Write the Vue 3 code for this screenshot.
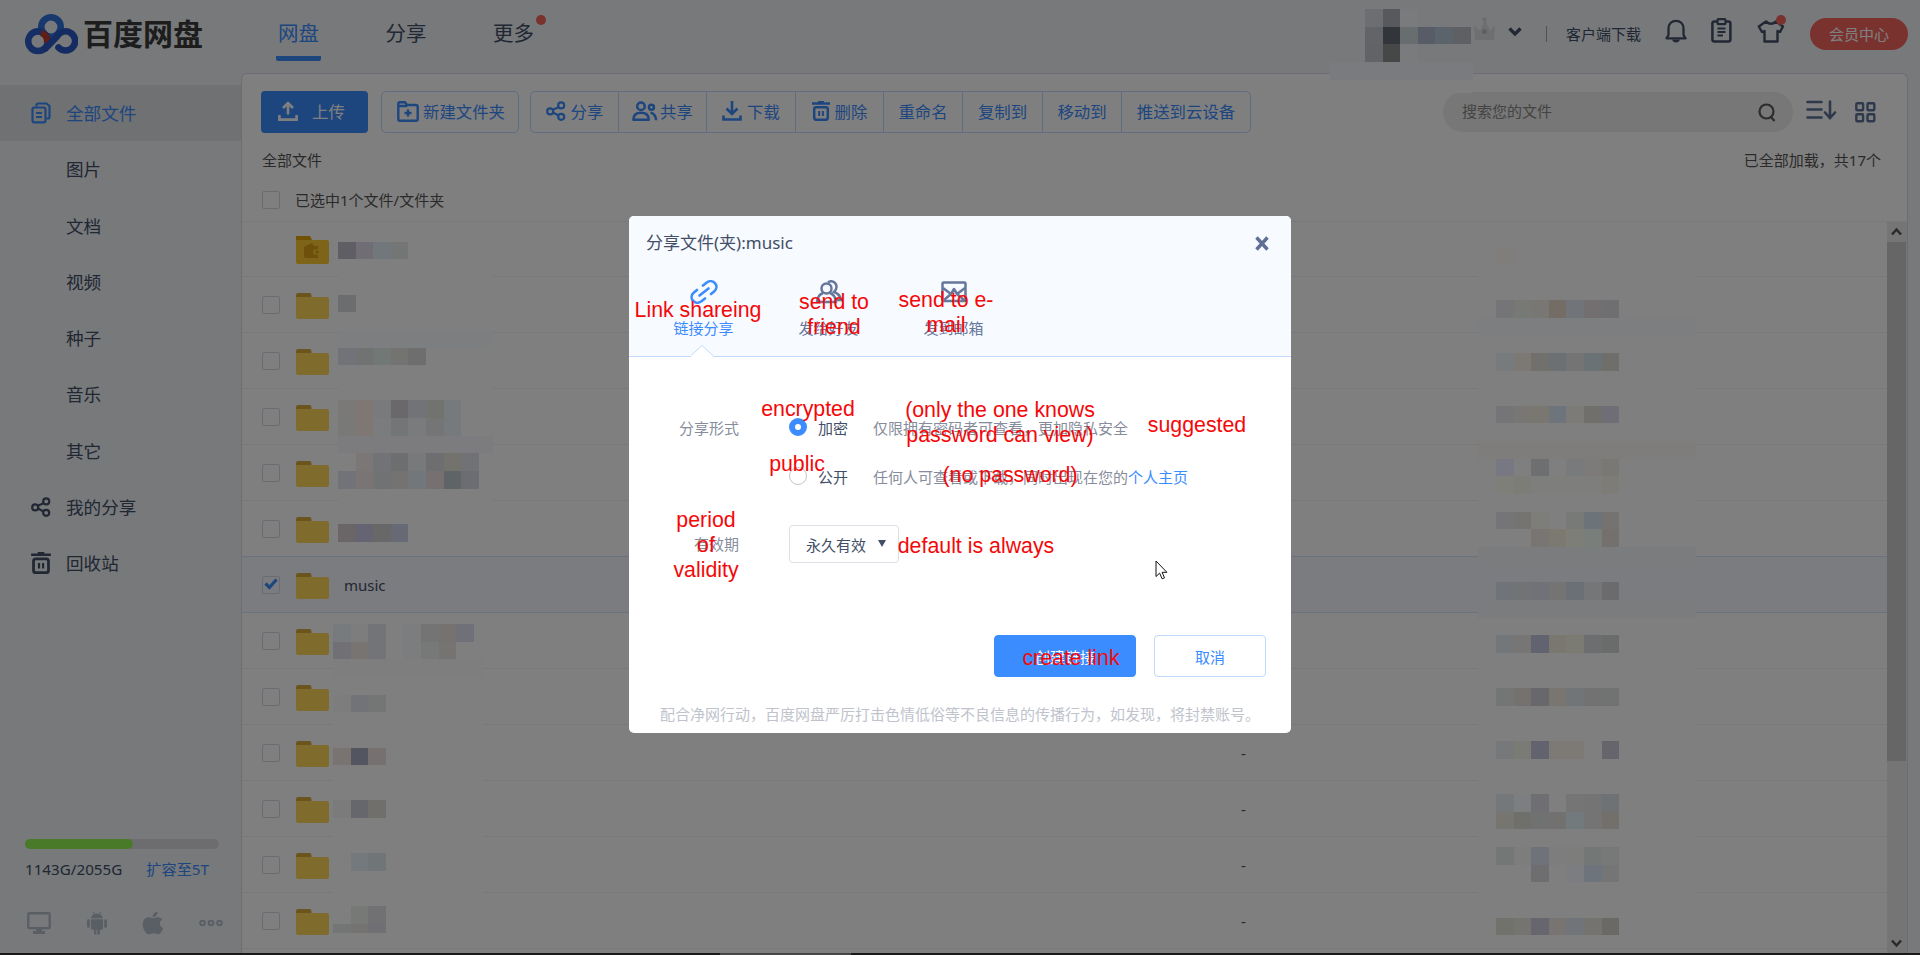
<script setup>
import { ref } from 'vue'

const navs = ['网盘', '分享', '更多']
const activeNav = ref(0)

const menus = [
  { name: '全部文件', icon: 'files' },
  { name: '图片' },
  { name: '文档' },
  { name: '视频' },
  { name: '种子' },
  { name: '音乐' },
  { name: '其它' },
  { name: '我的分享', icon: 'share' },
  { name: '回收站', icon: 'trash' },
]
const activeMenu = ref(0)

const tools = [
  { name: '分享', icon: 'share', w: 88 },
  { name: '共享', icon: 'people', w: 88 },
  { name: '下载', icon: 'download', w: 89 },
  { name: '删除', icon: 'trash', w: 88 },
  { name: '重命名', w: 79 },
  { name: '复制到', w: 80 },
  { name: '移动到', w: 79 },
  { name: '推送到云设备', w: 128 },
]

// 第一行是卡包文件夹，没有复选框
const files = ref(
  Array.from({ length: 13 }, (_, i) => ({
    name: i === 6 ? 'music' : '',
    card: i === 0,
    checked: i === 6,
    size: '-',
  }))
)

const tabs = ['链接分享', '发给好友', '发到邮箱']
const activeTab = ref(0)
const mode = ref('private')

// 马赛克色块：每段 [起始 x, y, 高度, 颜色...]，空字符串表示透明
const strips = [
  [1365, 9, 18, '#6c6e72', '#58595d', '#797b7d'],
  [1365, 27, 17, '#626468', '#32353a', '#686d70', '#585c66', '#5c646b', '#5f6063'],
  [1365, 44, 18, '#626367', '#464747', '#797b7d'],
  [338, 242, 17, '#605e65', '#706e74', '#72777b', '#737674'],
  [338, 295, 17, '#6b6d6f'],
  [338, 348, 17, '#727379', '#707371', '#717876', '#737372', '#6f6e6f'],
  [338, 400, 18, '#7a7977', '#7e7774', '#797a7c', '#6b686c', '#717378', '#72736f', '#777a7c'],
  [338, 418, 18, '#797a78', '#7e7774', '#7b7c7e', '#737577', '#7a7b7d', '#757575', '#777a7c'],
  [338, 453, 18, '', '#7a7776', '#727376', '#6d6e6f', '#78797b', '#6e6d70', '#73726c', '#717276'],
  [338, 471, 18, '#727379', '#7a7574', '#717273', '#747371', '#72777b', '#767070', '#5f6567', '#6c6d73'],
  [338, 524, 18, '#6a6567', '#656473', '#696869', '#676a74'],
  [333, 624, 18, '#777b7d', '#7e7d7d', '#727478', '', '#7b7d7e', '#757474', '#757270', '#707178'],
  [333, 642, 17, '#717074', '#777472', '#727478', '', '#7b7d7e', '#767977', '#767373'],
  [333, 695, 17, '#7d7d7d', '#727378', '#737675'],
  [333, 748, 17, '#797472', '#535560', '#767070'],
  [333, 800, 18, '#7b7b7b', '#66676c', '#716f6c'],
  [333, 853, 18, '', '#73797d', '#707578'],
  [333, 906, 18, '', '#777977', '#717173'],
  [333, 924, 9, '#747575', '#757371', '#707074'],
  [1496, 247, 18, '#7f7e7a'],
  [1496, 300, 18, '#757578', '#777974', '#797774', '#746d66', '#717478', '#736f70', '#6f6f72'],
  [1496, 353, 18, '#787b7d', '#7c7975', '#72706d', '#6d7073', '#737473', '#6b7275', '#706e6b'],
  [1496, 406, 17, '#757578', '#787773', '#797770', '#6e747c', '#7c7b77', '#706f6c', '#6f6d76'],
  [1496, 459, 17, '#777881', '', '#6e6f71', '', '#787a7c', '#7d7b79', '#7a7875'],
  [1496, 476, 18, '#7f7f7a', '#7d7d78', '#7e7e7d', '#7e7e7d', '#7e7e7d', '#7e7e7d', '#7d7c77'],
  [1496, 512, 17, '#757578', '#767471', '#7d7e7a', '#7f7f7f', '#777a77', '#6c7479', '#767270'],
  [1496, 529, 18, '', '', '#787572', '#7c7a70', '#7d7e78', '#7a7e7b', '#73706d'],
  [1496, 582, 18, '#70747a', '#727374', '#707278', '#747472', '#6a7075', '#757678', '#6b6b6d'],
  [1496, 635, 18, '#74777a', '#787674', '#616371', '#797770', '#7b7a73', '#6d6e6f', '#6a6b6b'],
  [1496, 688, 18, '#737675', '#75716f', '#68676c', '#797571', '#727578', '#727272', '#707371'],
  [1496, 741, 18, '#76787a', '#7b7b76', '#62636f', '#7d7a75', '#7d7975', '', '#67656c'],
  [1496, 794, 18, '#75787b', '#7d7e80', '#6f6f73', '', '#757576', '#747474', '#6f7275'],
  [1496, 812, 17, '#777570', '#6f6f6c', '#707171', '#73716f', '#737a7d', '#757474', '#73706c'],
  [1496, 847, 18, '#737776', '#7d7d7e', '#70727a', '#7d7d7d', '#7d7e7b', '#737776', '#767977'],
  [1496, 865, 17, '', '', '#6e6e71', '', '#7b7d80', '#6e747c', '#757576'],
  [1496, 918, 17, '#72726d', '#757470', '#67656d', '#777471', '#717478', '#747370', '#6b6965'],
]
const CELL = 17.6
const cells = strips.flatMap(([x, y, h, ...colors]) =>
  colors
    .map((fill, i) => {
      const left = Math.round(x + i * CELL)
      return { x: left, y, h, w: Math.round(x + (i + 1) * CELL) - left, fill }
    })
    .filter((c) => c.fill)
)
// 色块外围：blanks 在遮罩下面，盖住行线；tints 是略带颜色的横条
const blanks = [
  [1330, 80, 143, 13],
  [338, 262, 155, 280],
  [333, 624, 150, 309],
  [1478, 247, 218, 300],
  [1478, 618, 218, 317],
]
const tints = [
  [1330, 62, 143, 18, '#7a7b7e'],
  [338, 331, 155, 17, '#7d7e80'],
  [338, 436, 155, 17, '#7c7b7e'],
  [333, 659, 150, 18, '#7e7e7e'],
  [1478, 318, 218, 17, '#7c7e80'],
  [1478, 441, 218, 18, '#7e7d7c'],
  [1478, 547, 218, 20, '#7b7c7e'],
  [1478, 600, 218, 18, '#7b7c7d'],
]

// 英文批注
const notes = [
  { x: 698, y: 298, lines: ['Link shareing'] },
  { x: 834, y: 290, lines: ['send to', 'friend'] },
  { x: 946, y: 288, lines: ['send to e-', 'mail'] },
  { x: 808, y: 397, lines: ['encrypted'] },
  { x: 1000, y: 398, lines: ['(only the one knows', 'password can view)'] },
  { x: 1197, y: 413, lines: ['suggested'] },
  { x: 797, y: 452, lines: ['public'] },
  { x: 1010, y: 463, lines: ['(no password)'] },
  { x: 706, y: 508, lines: ['period', 'of', 'validity'] },
  { x: 976, y: 534, lines: ['default is always'] },
  { x: 1071, y: 646, lines: ['create link'] },
]
</script>

<template>
  <div class="page">
    <!-- 图标定义 -->
    <svg class="defs" width="0" height="0" aria-hidden="true">
      <symbol id="i-share" viewBox="0 0 20 20">
        <g fill="none" stroke="currentColor" stroke-width="2.2">
          <circle cx="4.2" cy="10.4" r="3" />
          <circle cx="15.2" cy="4.4" r="3" />
          <circle cx="15.2" cy="15.8" r="3" />
          <path d="M6.8 8.8 9.6 7.6 12.6 6M7 11.6l5.6 2.9" />
        </g>
      </symbol>
      <symbol id="i-people" viewBox="0 0 26 20">
        <g fill="none" stroke="currentColor" stroke-width="2.5">
          <circle cx="9" cy="5.2" r="3.8" />
          <path d="M1.4 18.7c0-5 3-7 7.6-7s7.8 2 7.8 7z" stroke-linejoin="round" />
          <circle cx="19.4" cy="6.2" r="2.5" />
          <path d="M18.5 11.6c3.4.8 5.4 3.2 5.6 7.6" />
        </g>
      </symbol>
      <symbol id="i-download" viewBox="0 0 20 20">
        <path d="M10 0v12M4.5 7.5 10 13l5.5-5.5M1.5 14.5v4h17v-4" fill="none" stroke="currentColor" stroke-width="2.6" />
      </symbol>
      <symbol id="i-upload" viewBox="0 0 20 20">
        <path d="M10 13.5V2M5 7l5-5 5 5M1.4 14v4.6h17.2V14" fill="none" stroke="currentColor" stroke-width="2.6" />
      </symbol>
      <symbol id="i-trash" viewBox="0 0 18 20">
        <path d="M0 2.5h18M6 1.2h6" stroke="currentColor" stroke-width="2.4" />
        <rect x="2.2" y="6.2" width="13.6" height="12.6" rx="2" fill="none" stroke="currentColor" stroke-width="2.5" />
        <path d="M7.2 10v5M10.9 10v5" stroke="currentColor" stroke-width="2" />
      </symbol>
      <symbol id="i-files" viewBox="0 0 20 22">
        <g fill="none" stroke="currentColor" stroke-width="2.2">
          <path d="M5.5 4.5V3q0-1.5 1.5-1.5h8.5L18.5 4v11q0 1.5-1.5 1.5h-1.5" />
          <rect x="1.5" y="5.5" width="13" height="14.8" rx="1.8" />
          <path d="M5 11h6M5 15h6" />
        </g>
      </symbol>
    </svg>

    <header class="header">
      <div class="logo">
        <svg width="53" height="41" viewBox="0 0 53 41">
          <g fill="none" stroke-width="6.6">
            <circle cx="26" cy="13" r="9.7" stroke="#3072dc" />
            <circle cx="13" cy="27.2" r="9.8" stroke="#2a5cc8" />
            <path d="M16 19q7 2 6 10" stroke="#c23a30" stroke-width="6.5" />
            <path d="M20.5 34.5 32 22.500a9.600 9.600 0 1 1 1.500 11" stroke="#2a58c4" stroke-linecap="round" />
          </g>
        </svg>
        <span class="logo-text">百度网盘</span>
      </div>
      <nav class="nav">
        <a
          v-for="(n, i) in navs"
          :key="n"
          class="nav-item"
          :class="{ active: i === activeNav }"
          @click="activeNav = i"
        >{{ n }}<i v-if="i === 2" class="red-dot"></i></a>
      </nav>
      <div class="user">
        <svg class="crown" width="24" height="26" viewBox="0 0 24 26">
          <path d="M2 24h19l1-15-5 6-5-12-5 12-6-6z" fill="#dddfe0" />
          <circle cx="11.5" cy="3.5" r="2" fill="#d4d6d9" />
          <circle cx="11.5" cy="15.5" r="2.5" fill="#bcbec2" />
        </svg>
        <svg class="caret" width="14" height="10" viewBox="0 0 14 10">
          <path d="M1.5 1.5 7 7l5.5-5.5" fill="none" stroke="#424e67" stroke-width="3.2" />
        </svg>
        <i class="sep"></i>
        <span class="client">客户端下载</span>
        <svg class="bell" width="22" height="24" viewBox="0 0 22 24">
          <path d="M1.5 19.3 3.5 16V9.5C3.5 4.500 7 1.800 11 1.800s7.500 2.700 7.500 7.700V16l2 3.300z" fill="none" stroke="#424e67" stroke-width="2.3" stroke-linejoin="round" />
          <path d="M7 20.5h8q-1 3-4 3t-4-3z" fill="#424e67" />
        </svg>
        <svg class="clip" width="21" height="25" viewBox="0 0 21 25">
          <rect x="1.4" y="3.6" width="18" height="20" rx="2" fill="none" stroke="#424e67" stroke-width="2.5" />
          <rect x="6.5" y="1.2" width="8" height="5" rx="1" fill="#eef2f6" stroke="#424e67" stroke-width="2.2" />
          <path d="M6.5 10.5h8M6.5 14h8M6.5 17.5h5.5" stroke="#424e67" stroke-width="2" />
        </svg>
        <div class="skin">
          <svg width="28" height="23" viewBox="0 0 28 23">
            <path d="M9 1.5q5 4.500 10 0l7 5-3 5.500-2.500-1v10.500h-13V11L5 12 1.800 6.500z" fill="none" stroke="#424e67" stroke-width="2.4" stroke-linejoin="round" />
          </svg>
          <i class="red-dot"></i>
        </div>
        <a class="vip">会员中心</a>
      </div>
    </header>

    <div class="body">
      <aside class="sidebar">
        <ul class="menu">
          <li
            v-for="(m, i) in menus"
            :key="m.name"
            :class="{ active: i === activeMenu }"
            @click="activeMenu = i"
          >
            <span class="menu-icon">
              <svg v-if="m.icon" width="20" height="22"><use :href="'#i-' + m.icon" /></svg>
            </span>
            {{ m.name }}
          </li>
        </ul>
        <div class="quota">
          <div class="bar"><div class="bar-fill"></div></div>
          <div class="quota-text">
            <span>1143G/2055G</span>
            <a>扩容至5T</a>
          </div>
          <div class="clients">
            <svg width="24" height="24" viewBox="0 0 24 24">
              <rect x="1.3" y="2.3" width="21.4" height="14.8" rx="1" fill="none" stroke="currentColor" stroke-width="2.4" />
              <path d="M9 18h6v2h3v3H6v-3h3z" fill="currentColor" />
            </svg>
            <svg width="22" height="24" viewBox="0 0 22 24" fill="currentColor">
              <path d="M5 7.3q.5-4.300 6-4.800 5.500.500 6 4.800zM5 8.300h12v9q0 1.400-1.400 1.400H14V23q-1.400 1.500-2.600 0v-4.300h-1V23Q9 24.500 8 23v-4.300H6.400Q5 18.700 5 17.300z" />
              <rect x="1" y="8.3" width="2.8" height="8.5" rx="1.4" />
              <rect x="18.2" y="8.3" width="2.8" height="8.5" rx="1.4" />
              <path d="m7 .8 1.800 2.700M15 .8l-1.800 2.700" stroke="currentColor" />
            </svg>
            <svg width="22" height="24" viewBox="0 0 22 24" fill="currentColor">
              <path d="M15.5.5c.3 3-2 5.600-4.900 5.700C10.400 3.500 12.700.9 15.500.5zM20.300 8.600c-3.700 2.300-3 7 .9 8.600-1.200 3-3 6-5 6-1.700 0-2.400-1-4.600-1s-3 1-4.600 1C4 23.200.8 17.800.8 13.400c0-7 6.200-8 8.700-6.600 1.400.7 2.300.6 3.800 0 2.600-1 5.400-.4 7 1.800z" />
            </svg>
            <svg width="24" height="24" viewBox="0 0 24 24" fill="none" stroke="currentColor" stroke-width="2">
              <circle cx="3.5" cy="12" r="2.3" />
              <circle cx="12" cy="12" r="2.3" />
              <circle cx="20.5" cy="12" r="2.3" />
            </svg>
          </div>
        </div>
      </aside>

      <main class="main">
        <div class="toolbar">
          <button class="btn-upload">
            <svg width="20" height="20"><use href="#i-upload" /></svg>上传
          </button>
          <button class="btn-new">
            <svg width="22" height="21" viewBox="0 0 22 21" fill="none" stroke="currentColor" stroke-width="2.4">
              <path d="M1.3 5.500V3q0-1.700 1.700-1.700h5L10 4h9q1.700 0 1.700 1.700v12.500q0 1.500-1.700 1.500H3q-1.700 0-1.700-1.500zM1.300 5h9" />
              <path d="M11 8.500v7M7.500 12h7" />
            </svg>新建文件夹
          </button>
          <div class="group">
            <button v-for="t in tools" :key="t.name" :style="{ width: t.w + 'px' }">
              <svg
                v-if="t.icon"
                :width="t.icon === 'people' ? 26 : 20"
                height="20"
                :class="t.icon"
              ><use :href="'#i-' + t.icon" /></svg>{{ t.name }}
            </button>
          </div>
          <div class="search">
            <span>搜索您的文件</span>
            <svg width="18" height="19" viewBox="0 0 18 19" fill="none" stroke="#5a5a5a" stroke-width="2.2">
              <circle cx="8.5" cy="8.5" r="7" />
              <path d="m12.5 13.5 4 4.500" />
            </svg>
          </div>
          <svg class="sort" width="31" height="20" viewBox="0 0 31 20" fill="none" stroke="#5f7299" stroke-width="2.6" stroke-linecap="round">
            <path d="M1.5 2h14M1.500 9.500h14M1.500 17.500h14M24 1.500v16M19 12.500l5 5.500 5-5.500" />
          </svg>
          <svg class="grid" width="21" height="21" viewBox="0 0 21 21" fill="none" stroke="#5f7299" stroke-width="2.4">
            <rect x="1.3" y="1.3" width="6.8" height="7" rx="1" />
            <rect x="12.5" y="1.3" width="6.8" height="7" rx="1" />
            <rect x="1.3" y="12.3" width="6.8" height="7" rx="1" />
            <rect x="12.5" y="12.3" width="6.8" height="7" rx="1" />
          </svg>
        </div>

        <div class="crumb">
          <span>全部文件</span>
          <span>已全部加载，共17个</span>
        </div>
        <div class="list-head">
          <i class="check"></i>
          <span>已选中1个文件/文件夹</span>
        </div>

        <div class="list">
          <div class="rows">
            <div v-for="(f, i) in files" :key="i" class="row" :class="{ selected: f.checked }">
              <i class="check" :class="{ hidden: f.card }" @click="f.checked = !f.checked">
                <svg v-if="f.checked" width="14" height="12" viewBox="0 0 14 12">
                  <path d="m1.5 5.500 4 4 7-8" fill="none" stroke="#3b8cff" stroke-width="3.2" />
                </svg>
              </i>
              <svg v-if="f.card" class="folder" width="33" height="28" viewBox="0 0 33 28">
                <path d="M0 0h14l2 4v4H0z" fill="#e0a400" />
                <path d="M0 4h31q2 0 2 2v20q0 2-2 2H2q-2 0-2-2z" fill="#fcc931" />
                <path d="M9 10l7-3 2 3h4v3q-5-.5-5 3t5 3v3H10q-2 0-2-2v-9z" fill="#dc9f16" />
                <circle cx="21" cy="16" r="1.8" fill="#dc9f16" />
              </svg>
              <svg v-else class="folder" width="33" height="26" viewBox="0 0 33 26">
                <path d="M0 2q0-2 2-2h12q1.500 0 1.500 4v3H0z" fill="#d7a93c" />
                <path d="M0 4h31q2 0 2 2v18q0 2-2 2H2q-2 0-2-2z" fill="#ffd659" />
              </svg>
              <span class="name">{{ f.name }}</span>
              <span class="size">{{ f.size }}</span>
            </div>
          </div>
          <div class="scrollbar">
            <svg width="19" height="20" viewBox="0 0 19 20"><path d="m5 12.500 4.500-5 4.500 5" /></svg>
            <div class="thumb"></div>
            <svg width="19" height="20" viewBox="0 0 19 20"><path d="m5 7.500 4.500 5 4.500-5" /></svg>
          </div>
        </div>
      </main>
    </div>

    <div class="taskbar"><i></i></div>

    <svg class="layer" width="1920" height="955" aria-hidden="true">
      <rect v-for="(b, i) in blanks" :key="i" :x="b[0]" :y="b[1]" :width="b[2]" :height="b[3]" fill="#fff" />
    </svg>
    <div class="layer mask"></div>
    <svg class="layer" width="1920" height="955" shape-rendering="crispEdges" aria-hidden="true">
      <rect v-for="(t, i) in tints" :key="'t' + i" :x="t[0]" :y="t[1]" :width="t[2]" :height="t[3]" :fill="t[4]" />
      <rect v-for="(c, i) in cells" :key="'c' + i" :x="c.x" :y="c.y" :width="c.w" :height="c.h" :fill="c.fill" />
    </svg>

    <section class="dialog">
      <div class="dialog-head">
        <div class="dialog-title">
          <span>分享文件(夹):music</span>
          <svg width="14" height="15" viewBox="0 0 14 15">
            <path d="m1.500 1.500 11 12M12.500 1.500l-11 12" stroke="#5f6f93" stroke-width="3.400" />
          </svg>
        </div>
        <div class="tabs">
          <a
            v-for="(t, i) in tabs"
            :key="t"
            class="tab"
            :class="{ active: i === activeTab }"
            @click="activeTab = i"
          >
            <svg v-if="i === 0" width="28" height="24" viewBox="0 0 28 24" fill="none" stroke="currentColor" stroke-width="2.6" stroke-linecap="round">
              <path d="M9.5 15.500 18.500 8.500" />
              <path d="M13 5.500l3.500-2.800c3-2.200 6.600-1.800 8.600.6s1.600 6-1 8.200L21 14" />
              <path d="M15 18.500l-3.500 2.800c-3 2.200-6.600 1.800-8.600-.6s-1.600-6 1-8.200L7 10" />
            </svg>
            <svg v-else-if="i === 1" width="28" height="24" viewBox="0 0 28 24" fill="none" stroke="currentColor" stroke-width="2.5">
              <circle cx="11.5" cy="8.5" r="5" />
              <path d="M13 2.500q3-2.500 6.500 0c3 2.500 2.500 7-.5 9.500q6 2 7 8h-5" />
              <path d="M8 13q-5.500 2-6 9h19q-.5-7-6-9" />
            </svg>
            <svg v-else width="28" height="24" viewBox="0 0 28 24" fill="none" stroke="currentColor" stroke-width="2.5" stroke-linejoin="round">
              <rect x="2.5" y="2.5" width="23" height="18.5" rx="1" />
              <path d="m3 8 8 6 3-5 3 5 8-6M4 20l7-6M24 20l-7-6" />
            </svg>
            {{ t }}
          </a>
        </div>
        <svg class="notch" width="22" height="12" viewBox="0 0 22 12">
          <path d="M0 10.500 11 .5l11 10V12H0z" fill="#fff" />
          <path d="M0 10.500 11 .5l11 10" fill="none" stroke="#c0d9fe" />
        </svg>
      </div>

      <div class="form">
        <div class="line first">
          <label>分享形式</label>
          <i class="radio" :class="{ on: mode === 'private' }" @click="mode = 'private'"></i>
          <b>加密</b>
          <span>仅限拥有密码者可查看，更加隐私安全</span>
        </div>
        <div class="line">
          <label></label>
          <i class="radio" :class="{ on: mode === 'public' }" @click="mode = 'public'"></i>
          <b>公开</b>
          <span>任何人可查看或下载，同时出现在您的<a>个人主页</a></span>
        </div>
        <div class="line period">
          <label>有效期</label>
          <div class="select">永久有效<i></i></div>
        </div>
      </div>

      <div class="actions">
        <button class="primary">创建链接</button>
        <button class="cancel">取消</button>
      </div>
      <p class="tip">配合净网行动，百度网盘严厉打击色情低俗等不良信息的传播行为，如发现，将封禁账号。</p>
    </section>

    <div
      v-for="n in notes"
      :key="n.lines[0]"
      class="note"
      :style="{ left: n.x + 'px', top: n.y + 'px' }"
    >
      <div v-for="l in n.lines" :key="l">{{ l }}</div>
    </div>

    <svg class="cursor" width="13" height="20" viewBox="0 0 13 20">
      <path d="M1 1v15.500l3.600-3.400 2.500 5.700 2.400-1-2.400-5.500h4.800z" fill="#fff" stroke="#111" />
    </svg>
  </div>
</template>

<style>
body {
  margin: 0;
  overflow: hidden;
}
</style>

<style scoped>
.page {
  position: relative;
  display: flex;
  flex-direction: column;
  width: 1920px;
  height: 955px;
  overflow: hidden;
  background: #eef2f6;
  color: #424e67;
  font: 15px/20px "Noto Sans", "Noto Sans CJK SC", sans-serif;
  white-space: nowrap;
}
.page * {
  box-sizing: border-box;
}
.defs {
  position: absolute;
}
svg {
  flex: none;
  display: block;
}
button {
  font: inherit;
  padding: 0;
  background: none;
}

/* ===== 顶栏 ===== */
.header {
  display: flex;
  height: 73px;
  flex: none;
}
.logo {
  display: flex;
  align-items: center;
  gap: 5px;
  width: 276px;
  padding: 0 0 5px 25px;
}
.logo-text {
  margin-top: -1px;
  font-size: 30px;
  line-height: 40px;
  font-weight: 700;
  color: #3a3a3a;
}
.nav {
  display: flex;
  gap: 62.500px;
}
.nav-item {
  position: relative;
  width: 45px;
  height: 61px;
  padding-top: 13px;
  line-height: 40px;
  font-size: 20.500px;
  text-align: center;
}
.nav-item.active {
  color: #3b8cff;
  border-bottom: 5px solid #3b8cff;
  border-radius: 2px;
}
.red-dot {
  position: absolute;
  top: 15px;
  right: -10px;
  width: 10px;
  height: 10px;
  border-radius: 50%;
  background: #f4645f;
}
.user {
  display: flex;
  align-items: center;
  height: 67px;
  margin-left: auto;
  padding-right: 12px;
}
.crown {
  margin: -9px 11px 0 0;
}
.caret {
  margin-top: -4px;
}
.sep {
  width: 1px;
  height: 16px;
  margin: 0 19px 0 24px;
  background: #a0a5ae;
}
.bell {
  margin: -5px 24px 0 24px;
}
.clip {
  margin-top: -6px;
}
.skin {
  position: relative;
  margin: -5px 25px 0;
}
.skin .red-dot {
  top: -5px;
  right: -1px;
}
.vip {
  width: 98px;
  height: 32px;
  line-height: 32px;
  border-radius: 16px;
  background: #f4645f;
  color: #fff;
  text-align: center;
}

/* ===== 侧栏 ===== */
.body {
  display: flex;
  flex: 1;
  min-height: 0;
}
.sidebar {
  display: flex;
  flex-direction: column;
  width: 241px;
  padding-top: 12px;
}
.menu {
  margin: 0;
  padding: 0;
  list-style: none;
}
.menu li {
  display: flex;
  align-items: center;
  height: 56.250px;
  font-size: 17.600px;
}
.menu li.active {
  background: #e0e2e5;
  color: #3b8cff;
}
.menu-icon {
  width: 66px;
  padding-left: 31px;
}
.quota {
  margin: auto 0 18px;
  padding: 0 22px 0 25px;
}
.bar {
  height: 10px;
  border-radius: 5px;
  background: #dadbde;
}
.bar-fill {
  width: 108px;
  height: 100%;
  border-radius: 5px;
  background: #92f455;
}
.quota-text {
  display: flex;
  justify-content: space-between;
  margin-top: 10px;
  padding-right: 10px;
  font-size: 15.200px;
}
.quota-text a,
.line a {
  color: #3b8cff;
}
.clients {
  display: flex;
  justify-content: space-between;
  margin: 32px -4px 0 2px;
  color: #b4bccb;
}

/* ===== 文件区 ===== */
.main {
  display: flex;
  flex-direction: column;
  width: 1667px;
  border: 1px solid #d9dde8;
  border-bottom: 0;
  border-radius: 6px 6px 0 0;
  background: #fff;
}
.toolbar {
  display: flex;
  align-items: center;
  padding: 17px 31px 0 19px;
  color: #3b8cff;
  font-size: 16.400px;
}
.btn-upload,
.btn-new,
.group button {
  display: flex;
  align-items: center;
  color: inherit;
}
.btn-upload {
  width: 107px;
  height: 42px;
  padding-left: 17px;
  gap: 14px;
  border: 0;
  border-radius: 4px;
  background: #3b8cff;
  color: #fff;
}
.btn-new {
  width: 138px;
  height: 42px;
  margin: 0 11px 0 13px;
  padding-left: 15px;
  gap: 4px;
  border: 1px solid #c0d9fe;
  border-radius: 5px;
}
.group {
  display: flex;
  height: 42px;
  border: 1px solid #c0d9fe;
  border-radius: 5px;
}
.group button {
  justify-content: center;
  gap: 5px;
  border: 0;
  border-right: 1px solid #c0d9fe;
}
.group button:last-child {
  border-right: 0;
}
.group .people {
  margin-right: -3px;
}
.group .trash {
  width: 18px;
}
.btn-upload svg,
.btn-new svg,
.group svg {
  margin-top: -2px;
}
.search {
  display: flex;
  align-items: center;
  justify-content: space-between;
  width: 350px;
  height: 40px;
  margin-left: auto;
  padding: 0 17px 0 19px;
  border-radius: 20px;
  background: #eeeeee;
  color: #888;
  font-size: 15px;
}
.search span {
  margin-top: -2px;
}
.sort {
  margin: -4px 18px 0 13px;
}
.crumb {
  display: flex;
  justify-content: space-between;
  margin-top: 17px;
  padding: 0 26px 0 20px;
  color: #555;
}
.list-head {
  display: flex;
  align-items: center;
  gap: 15px;
  height: 52px;
  padding: 9px 0 0 20px;
  border-bottom: 1px solid #f0f2f7;
  color: #555;
}
.check {
  display: flex;
  align-items: center;
  justify-content: center;
  flex: none;
  width: 18px;
  height: 18px;
  border: 1px solid #d3d9e4;
  border-radius: 2px;
}
.check.hidden {
  visibility: hidden;
}
.check svg {
  margin-top: -3px;
}
.list {
  display: flex;
  flex: 1;
  min-height: 0;
  overflow: hidden;
}
.rows {
  flex: 1;
}
.row {
  display: flex;
  align-items: center;
  height: 56px;
  padding: 1px 0 0 20px;
  border-bottom: 1px solid #f0f2f7;
}
.row:first-child {
  height: 55px;
}
.row.selected {
  margin-top: -1px;
  height: 57px;
  border-top: 1px solid #d3e4fd;
  border-bottom-color: #d3e4fd;
  background: #f4f8ff;
}
.folder {
  margin: 1px 15px 0 16px;
}
.name {
  width: 897px;
}
.scrollbar {
  display: flex;
  flex-direction: column;
  width: 20px;
  padding-right: 1px;
  background: #ebebeb;
}
.scrollbar svg {
  fill: none;
  stroke: #555;
  stroke-width: 2.500;
}
.thumb {
  height: 519px;
  margin-bottom: auto;
  background: #cdcdcd;
}
.taskbar {
  flex: none;
  height: 2px;
  background: #333;
}
.taskbar i {
  display: block;
  width: 131px;
  height: 2px;
  margin-left: 720px;
  background: #8c8c8c;
}

.layer {
  position: absolute;
  top: 0;
  left: 0;
  width: 1920px;
  height: 955px;
}
.mask {
  background: rgba(0, 0, 0, 0.5);
}

/* ===== 分享弹窗 ===== */
.dialog {
  position: absolute;
  top: 216px;
  left: 629px;
  width: 662px;
  height: 517px;
  border-radius: 5px;
  overflow: hidden;
  background: #fff;
}
.dialog-head {
  position: relative;
  height: 141px;
  border-bottom: 1px solid #c0d9fe;
  background: #f7faff;
}
.dialog-title {
  display: flex;
  align-items: center;
  justify-content: space-between;
  height: 54px;
  padding: 0 22px 0 17px;
  font-size: 17px;
}
.tabs {
  display: flex;
  padding: 10px 0 0 12px;
  color: #66779c;
}
.tab {
  display: flex;
  flex-direction: column;
  align-items: center;
  gap: 14px;
  width: 125px;
}
.tab.active {
  color: #3b8cff;
}
.notch {
  position: absolute;
  left: 62px;
  bottom: -1px;
}
.form {
  padding-top: 60px;
}
.line {
  display: flex;
  align-items: center;
  height: 22px;
  margin-bottom: 27px;
  color: #878c9c;
}
.line label {
  width: 110px;
  text-align: right;
}
.radio {
  width: 18px;
  height: 18px;
  margin: -2px 11px 0 50px;
  border: 1px solid #c3c6cd;
  border-radius: 50%;
}
.radio.on {
  border: 6px solid #3b8cff;
}
.line b {
  width: 55px;
  font-weight: inherit;
  color: #424e67;
}
.period {
  height: 38px;
  margin-top: 37px;
}
.select {
  display: flex;
  align-items: center;
  width: 110px;
  height: 38px;
  margin-left: 50px;
  padding: 2px 0 0 16px;
  border: 1px solid #dcdfe6;
  border-radius: 4px;
  color: #424e67;
}
.select i {
  margin: -4px 0 0 12px;
  border: 4px solid transparent;
  border-top: 7px solid #424e67;
  border-bottom: 0;
}
.actions {
  display: flex;
  gap: 18px;
  justify-content: flex-end;
  margin-top: 72px;
  padding-right: 25px;
}
.actions button {
  height: 42px;
  padding-top: 2px;
  border: 1px solid #c0d9fe;
  border-radius: 4px;
  color: #3b8cff;
}
.actions .primary {
  width: 142px;
  border-color: #3b8cff;
  background: #3b8cff;
  color: #fff;
}
.actions .cancel {
  width: 112px;
}
.tip {
  margin: 27px 0 0 31px;
  color: #c0c3cc;
}

.note {
  position: absolute;
  transform: translateX(-50%);
  font: 21.330px/25px "Liberation Sans", Arial, sans-serif;
  color: #f40808;
  text-align: center;
}
.cursor {
  position: absolute;
  left: 1155px;
  top: 560px;
}
</style>
